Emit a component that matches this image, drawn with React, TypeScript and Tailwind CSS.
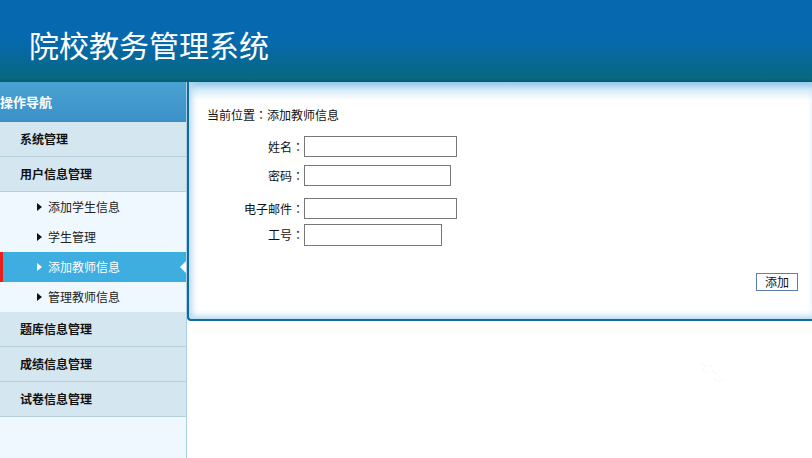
import React from "react";

const font = { fontFamily: '"Noto Sans CJK SC", "Noto Sans", sans-serif' };

const groups = ["题库信息管理", "成绩信息管理", "试卷信息管理"];

const subItems = [
  { label: "添加学生信息" },
  { label: "学生管理" },
  { label: "添加教师信息", active: true },
  { label: "管理教师信息" },
];

// centred full-width colon, like the reference's SimSun rendering
function Colon() {
  return <span className="font-['Noto_Sans_CJK_JP',sans-serif]">：</span>;
}

function Caret({ white }: { white?: boolean }) {
  return (
    <svg width="5" height="8" viewBox="0 0 5 8" className="mr-[6px] shrink-0">
      <path d="M0 0 L5 4 L0 8 Z" fill={white ? "#ffffff" : "#111111"} />
    </svg>
  );
}

function GroupRow({ label }: { label: string }) {
  return (
    <div className="flex h-[35px] items-center border-b border-[#b6cfdc] bg-[#d4e6f0] pl-[20px] text-[12px] font-bold text-[#111]">
      {label}
    </div>
  );
}

function Field({ label, width, height = 21, mt }: { label: string; width: number; height?: number; mt: string }) {
  return (
    <div className={`flex items-center ${mt}`}>
      <span className="w-[97px] text-right text-[12px] leading-none text-[#111]">
        {label}
        <Colon />
      </span>
      <input
        className="border border-[#777] bg-white outline-none"
        style={{ width, height }}
        type="text"
      />
    </div>
  );
}

export default function App() {
  return (
    <div className="relative h-[458px] w-[812px] overflow-hidden bg-white" style={font}>
      <header className="h-[82px] bg-[linear-gradient(to_bottom,#0669b0_0%,#0669ae_50%,#07687f_96%,#055a70_100%)]">
        <h1 className="pl-[29px] pt-[29px] text-[30px] leading-[30px] font-normal text-white">院校教务管理系统</h1>
      </header>

      <div className="flex">
        <aside className="h-[376px] w-[187px] shrink-0 border-r border-[#a9d0e2] bg-[#eff8fe]">
          <div className="flex h-[40px] items-center bg-[linear-gradient(to_bottom,#4aa1d3,#3b91c8)] text-[13px] font-bold text-white">
            操作导航
          </div>
          <GroupRow label="系统管理" />
          <GroupRow label="用户信息管理" />
          <div className="bg-[#eff8fe]">
            {subItems.map((it) => (
              <div
                key={it.label}
                className={`relative flex h-[30px] items-center pl-[37px] text-[12px] ${
                  it.active ? "bg-[#3eade0] text-white" : "text-[#222]"
                }`}
              >
                {it.active && <span className="absolute left-0 top-0 h-full w-[3px] bg-[#e8201c]" />}
                <Caret white={it.active} />
                {it.label}
                {it.active && (
                  <svg width="6" height="12" viewBox="0 0 6 12" className="absolute right-0 top-[9px]">
                    <path d="M6 0 L0 6 L6 12 Z" fill="#ffffff" />
                  </svg>
                )}
              </div>
            ))}
          </div>
          {groups.map((g) => (
            <GroupRow key={g} label={g} />
          ))}
        </aside>

        <main className="flex-1">
          <div className="h-[239px] rounded-bl-[4px] border-b-2 border-l-2 border-[#1469a0] bg-[linear-gradient(to_bottom,#8cc5ea,#d6ebf8_8px,#ffffff_18px)] pl-[18px] pt-[23px] shadow-[inset_5px_0_6px_-2px_#b6dbf2,inset_0_-5px_6px_-2px_#b6dbf2]">
            <div className="text-[12px] leading-[20px] text-[#111]">
              当前位置<Colon />添加教师信息
            </div>
            <Field label="姓名" width={153} mt="mt-[11px]" />
            <Field label="密码" width={147} mt="mt-[8px]" />
            <Field label="电子邮件" width={153} mt="mt-[12px]" />
            <Field label="工号" width={138} height={22} mt="mt-[5px]" />
            <div className="mr-[14px] mt-[27px] flex justify-end">
              <button className="h-[18px] w-[42px] border border-[#5b7fae] bg-white text-[12px] leading-none text-[#111]">
                添加
              </button>
            </div>
          </div>
        </main>
      </div>

      <svg width="30" height="26" viewBox="0 0 30 26" className="absolute left-[699px] top-[361px] opacity-40">
        <path d="M1 2 L7 6 M10 4 L16 8 M4 8 L10 12 M13 10 L19 14 M20 16 L26 20 M16 18 L22 22" stroke="#e0b8c4" strokeWidth="0.8" strokeDasharray="1 1.5" />
      </svg>
    </div>
  );
}
